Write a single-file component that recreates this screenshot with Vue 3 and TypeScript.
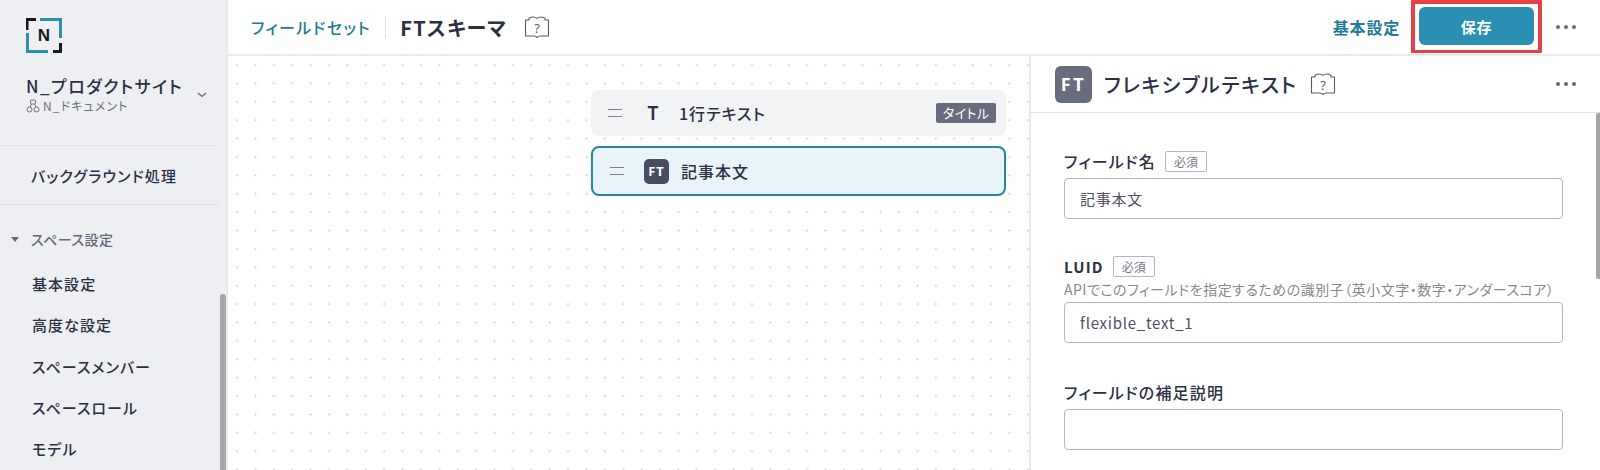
<script setup lang="ts">
const menuItems: string[] = ['基本設定', '高度な設定', 'スペースメンバー', 'スペースロール', 'モデル']
</script>

<template>
  <div class="page">
    <aside class="sidebar">
      <div class="logo">
        <svg width="36" height="36" viewBox="0 0 36 36" fill="none">
          <path d="M1 12V1.500H10" stroke="#17191f" stroke-width="3" />
          <path d="M14 1.500H34.500V20" stroke="#2a8fb0" stroke-width="3" />
          <path d="M1.500 15V33.500H22" stroke="#2a8fb0" stroke-width="3" />
          <path d="M27 33.500H34.500V25" stroke="#17191f" stroke-width="3" />
        </svg>
        <span class="logo-n">N</span>
      </div>
      <div class="project">
        <div>
          <div class="project-name">N_プロダクトサイト</div>
          <div class="project-sub">
            <svg width="14" height="14" viewBox="0 0 14 14" fill="none" stroke="#6a6e7c" stroke-width="1">
              <rect x="4.500" y="1" width="5" height="4" rx="1" />
              <circle cx="3.500" cy="10.500" r="2.500" />
              <circle cx="10.500" cy="10.500" r="2.500" />
              <path d="M5.500 5L4 8M8.500 5L10 8" />
            </svg>
            <span>N_ドキュメント</span>
          </div>
        </div>
        <svg class="chevron" width="10" height="6" viewBox="0 0 10 6" fill="none">
          <path d="M1 1L5 4.500L9 1" stroke="#5c6070" stroke-width="1.200" />
        </svg>
      </div>
      <div class="bg-row">バックグラウンド処理</div>
      <div class="section-title">
        <i class="triangle"></i>
        <span>スペース設定</span>
      </div>
      <ul class="menu">
        <li v-for="item in menuItems" :key="item">{{ item }}</li>
      </ul>
      <div class="side-scroll"></div>
    </aside>

    <main class="main">
      <header class="topbar">
        <a class="crumb">フィールドセット</a>
        <span class="crumb-sep"></span>
        <h1 class="page-title">FTスキーマ</h1>
        <svg class="book" width="26" height="23" viewBox="0 0 26 23" fill="none" stroke="#565b6e" stroke-width="1.100" stroke-linejoin="round">
          <path d="M5 4V2.200C8 .6 11 .8 13 2.400C15 .8 18 .6 21 2.200V4H24.500V20H16.500C15.200 20 14 20.500 13 21.500C12 20.500 10.800 20 9.500 20H1.500V4H5Z" />
          <text x="13" y="16.500" text-anchor="middle" class="book-q">?</text>
        </svg>
        <div class="spacer"></div>
        <a class="top-link">基本設定</a>
        <div class="save-wrap">
          <button class="save">保存</button>
          <div class="highlight"></div>
        </div>
        <div class="dots"><i></i><i></i><i></i></div>
      </header>

      <div class="content">
        <section class="canvas">
          <div class="card card-plain">
            <div class="handle"></div>
            <span class="t-icon">T</span>
            <span class="card-name">1行テキスト</span>
            <span class="title-tag">タイトル</span>
          </div>
          <div class="card card-active">
            <div class="handle"></div>
            <span class="ft-small">FT</span>
            <span class="card-name">記事本文</span>
          </div>
        </section>

        <section class="panel">
          <div class="panel-head">
            <span class="ft-large">FT</span>
            <h2 class="panel-title">フレキシブルテキスト</h2>
            <svg class="book" width="26" height="23" viewBox="0 0 26 23" fill="none" stroke="#565b6e" stroke-width="1.100" stroke-linejoin="round">
              <path d="M5 4V2.200C8 .6 11 .8 13 2.400C15 .8 18 .6 21 2.200V4H24.500V20H16.500C15.200 20 14 20.500 13 21.500C12 20.500 10.800 20 9.500 20H1.500V4H5Z" />
              <text x="13" y="16.500" text-anchor="middle" class="book-q">?</text>
            </svg>
            <div class="spacer"></div>
            <div class="dots"><i></i><i></i><i></i></div>
          </div>
          <div class="form">
            <div class="field">
              <div class="label-row">
                <label>フィールド名</label>
                <span class="required">必須</span>
              </div>
              <div class="input">記事本文</div>
            </div>
            <div class="field field-luid">
              <div class="label-row">
                <label class="latin">LUID</label>
                <span class="required">必須</span>
              </div>
              <p class="help">APIでこのフィールドを指定するための識別子（英小文字・数字・アンダースコア）</p>
              <div class="input">flexible_text_1</div>
            </div>
            <div class="field field-note">
              <div class="label-row">
                <label>フィールドの補足説明</label>
              </div>
              <div class="input"></div>
            </div>
          </div>
          <div class="panel-scroll"></div>
        </section>
      </div>
    </main>
  </div>
</template>

<style>
html,
body {
  margin: 0;
  background: #fff;
  overflow: hidden;
}
</style>

<style scoped>
.page {
  display: flex;
  width: 1600px;
  height: 470px;
  overflow: hidden;
  font-family: "Noto Sans CJK JP", "Noto Sans", sans-serif;
  font-feature-settings: "palt";
  color: #2b3044;
}

.sidebar {
  position: relative;
  flex: 0 0 228px;
  box-sizing: border-box;
  padding-top: 18px;
  background: #eeeff2;
  border-right: 1px solid #e6e7ea;
}

.logo {
  position: relative;
  width: 36px;
  height: 36px;
  margin-left: 26px;
}

.logo-n {
  position: absolute;
  inset: 0;
  display: flex;
  align-items: center;
  justify-content: center;
  font-family: "Liberation Sans", sans-serif;
  font-size: 17px;
  font-weight: 700;
  color: #17191f;
}

.project {
  display: flex;
  align-items: center;
  height: 91px;
  margin-right: 7px;
  padding: 0 0 0 26px;
  border-bottom: 1px solid #e3e4e8;
}

.project-name {
  margin-top: -12px;
  font-size: 17px;
  font-weight: 500;
  line-height: 24px;
  letter-spacing: 1.500px;
  white-space: nowrap;
}

.project-sub {
  display: flex;
  align-items: center;
  gap: 3px;
  height: 16px;
  font-size: 12px;
  letter-spacing: 1.100px;
  color: #6a6e7c;
  white-space: nowrap;
}

.chevron {
  margin: -9px 0 0 14px;
}

.bg-row {
  display: flex;
  align-items: center;
  height: 58px;
  margin-right: 7px;
  padding-left: 31px;
  border-bottom: 1px solid #e3e4e8;
  font-size: 15px;
  font-weight: 500;
  letter-spacing: 1.200px;
}

.section-title {
  display: flex;
  align-items: center;
  gap: 12px;
  height: 24px;
  margin-top: 22px;
  padding-left: 11px;
  font-size: 14px;
  font-weight: 500;
  letter-spacing: 0.5px;
  color: #666a7a;
}

.triangle {
  width: 0;
  height: 0;
  border-left: 4px solid transparent;
  border-right: 4px solid transparent;
  border-top: 5px solid #666a7a;
}

.menu {
  margin: 12px 0 0;
  padding: 0 0 0 32px;
  list-style: none;
}

.menu li {
  height: 41.300px;
  font-size: 15px;
  font-weight: 500;
  line-height: 41px;
  letter-spacing: 1.050px;
  white-space: nowrap;
}

.side-scroll {
  position: absolute;
  top: 294px;
  right: 1px;
  width: 6px;
  height: 190px;
  border-radius: 3px;
  background: #a4a6ab;
}

.main {
  display: flex;
  flex: 1;
  flex-direction: column;
  min-width: 0;
}

.topbar {
  display: flex;
  align-items: center;
  box-sizing: border-box;
  flex: 0 0 56px;
  padding: 0 24px 0 23px;
  background: #fff;
  border-bottom: 2px solid #e9eaec;
}

.crumb {
  font-size: 16px;
  font-weight: 500;
  letter-spacing: 1.400px;
  color: #1f7a99;
  white-space: nowrap;
}

.crumb-sep {
  width: 1px;
  height: 22px;
  margin: 0 14px;
  background: #dfe0e4;
}

.page-title {
  margin: 0 17px 0 0;
  font-size: 20px;
  font-weight: 700;
  letter-spacing: 1.300px;
  color: #2b3044;
}

.book {
  flex: none;
}

.book-q {
  font-family: "Noto Sans", sans-serif;
  font-size: 13px;
  fill: #565b6e;
  stroke: none;
}

.spacer {
  flex: 1;
}

.top-link {
  font-size: 16px;
  font-weight: 700;
  letter-spacing: 0.8px;
  color: #1f7a99;
  white-space: nowrap;
}

.save-wrap {
  position: relative;
  margin: 0 22px 0 19px;
}

.save {
  display: block;
  width: 115px;
  height: 38px;
  margin-bottom: 2px;
  padding: 0;
  border: 0;
  border-radius: 6px;
  background: #2a8fb3;
  color: #fff;
  font: 700 15px "Noto Sans CJK JP", sans-serif;
  letter-spacing: 0.8px;
}

.highlight {
  position: absolute;
  top: -7px;
  left: -8px;
  right: -8px;
  bottom: -6px;
  border: 4px solid #ea3f46;
  border-bottom-width: 3px;
  border-radius: 1px;
  pointer-events: none;
}

.dots {
  display: flex;
  gap: 4px;
}

.dots i {
  width: 4px;
  height: 4px;
  border-radius: 50%;
  background: #656a7a;
}

.content {
  display: flex;
  flex: 1;
  min-height: 0;
}

.canvas {
  flex: 0 0 801px;
  box-sizing: border-box;
  padding: 34px 23px 0 363px;
  background-color: #fff;
  background-image: radial-gradient(circle, #d4d6da 0.9px, transparent 1.2px);
  background-size: 18.400px 18.400px;
  background-position: -0.200px -0.200px;
}

.card {
  display: flex;
  align-items: center;
  box-sizing: border-box;
  border-radius: 8px;
}

.card-plain {
  height: 46px;
  padding: 0 10px 0 17px;
  background: #f2f3f5;
}

.card-active {
  height: 50px;
  margin-top: 10px;
  padding: 0 10px 0 17px;
  border: 2px solid #2586a6;
  background: #e8f4f7;
}

.handle {
  flex: none;
  width: 14px;
  height: 6px;
  border-top: 1px solid #7d818e;
  border-bottom: 1px solid #7d818e;
}

.t-icon {
  flex: none;
  width: 14px;
  margin: 0 19px 0 24px;
  font-family: "Noto Sans", sans-serif;
  font-size: 19px;
  font-weight: 600;
  line-height: 1;
  text-align: center;
  color: #2b3044;
}

.card-name {
  font-size: 16px;
  font-weight: 500;
  letter-spacing: 1px;
  white-space: nowrap;
}

.title-tag {
  height: 20px;
  margin-left: auto;
  padding: 0 6.500px;
  border-radius: 2px;
  background: #686c7d;
  color: #fff;
  font-size: 13px;
  line-height: 20px;
  letter-spacing: 0.4px;
  white-space: nowrap;
}

.ft-small {
  flex: none;
  width: 25px;
  height: 25px;
  margin: 0 12px 0 20px;
  border-radius: 5px;
  background: #484d62;
  color: #fff;
  font-family: "Noto Sans", sans-serif;
  font-size: 13px;
  font-weight: 700;
  letter-spacing: 1px;
  line-height: 25px;
  text-align: center;
}

.panel {
  position: relative;
  flex: 1;
  min-width: 0;
  border-left: 2px solid #e9eaec;
}

.panel-head {
  display: flex;
  align-items: center;
  box-sizing: border-box;
  height: 57px;
  padding: 0 24px;
  border-bottom: 1px solid #e3e4e8;
}

.ft-large {
  flex: none;
  width: 37px;
  height: 37px;
  margin-right: 12px;
  border-radius: 6px;
  background: #686c7d;
  color: #fff;
  font-family: "Noto Sans", sans-serif;
  font-size: 18px;
  font-weight: 700;
  letter-spacing: 2.500px;
  line-height: 37px;
  text-align: center;
}

.panel-title {
  margin: 0 13px 0 0;
  font-size: 20px;
  font-weight: 500;
  letter-spacing: 1.600px;
  white-space: nowrap;
}

.form {
  padding: 37px 37px 0 33px;
}

.label-row {
  display: flex;
  align-items: center;
  gap: 9px;
  height: 22px;
}

.label-row label {
  font-size: 16px;
  font-weight: 500;
  letter-spacing: 1.200px;
  white-space: nowrap;
}

.label-row .latin {
  font-size: 15px;
  font-weight: 700;
  letter-spacing: 1.200px;
}

.required {
  box-sizing: border-box;
  width: 42px;
  height: 21px;
  border: 1px solid #b4b7c0;
  border-radius: 2px;
  color: #777b88;
  font-size: 12px;
  line-height: 19px;
  text-align: center;
}

.input {
  box-sizing: border-box;
  height: 41px;
  margin-top: 6px;
  padding-left: 15px;
  border: 1px solid #b4b7c2;
  border-radius: 4px;
  background: #fff;
  color: #4d5163;
  font-size: 15px;
  line-height: 39px;
  letter-spacing: 0.75px;
}

.field-luid {
  margin-top: 36px;
}

.help {
  margin: 3px 0 0;
  color: #85888f;
  font-size: 14px;
  line-height: 18px;
  letter-spacing: 0.5px;
  white-space: nowrap;
}

.field-luid .input {
  margin-top: 4px;
}

.field-note {
  margin-top: 38px;
}

.panel-scroll {
  position: absolute;
  top: 57px;
  right: 0;
  width: 4px;
  height: 166px;
  border-radius: 2px 0 0 2px;
  background: #a4a6ab;
}
</style>
